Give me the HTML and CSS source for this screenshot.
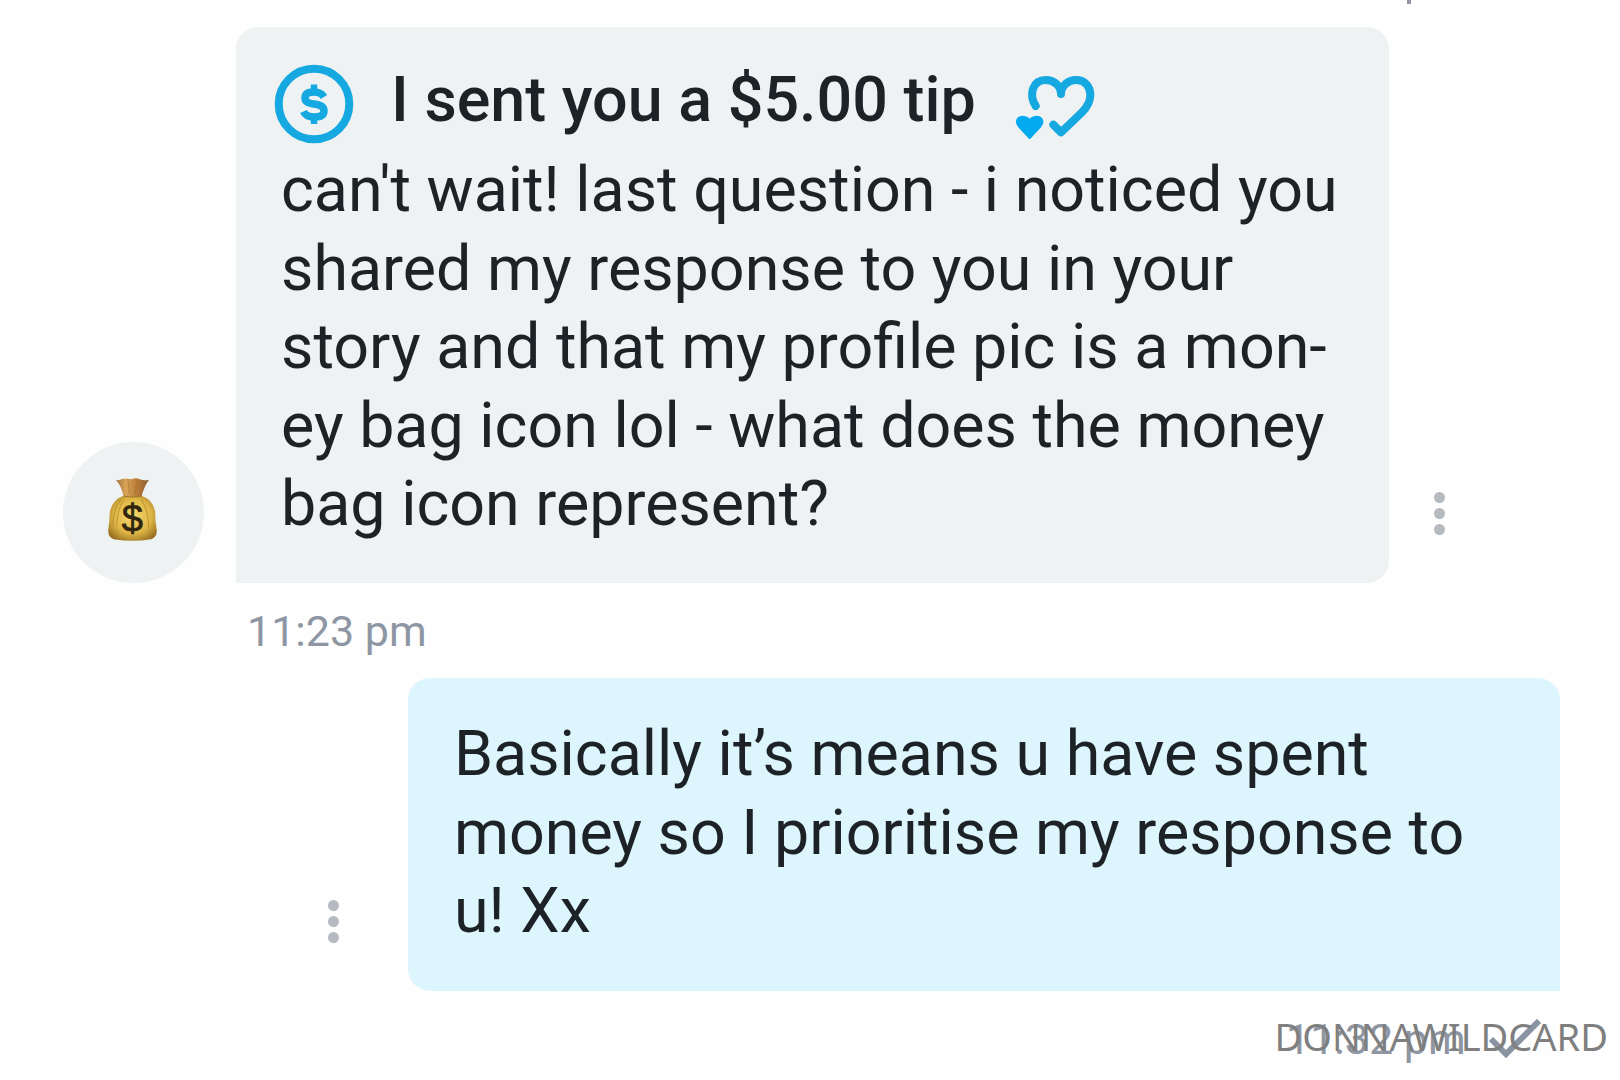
FILE: index.html
```html
<!DOCTYPE html>
<html lang="en">
<head>
  <meta charset="UTF-8">
  <meta name="viewport" content="width=device-width, initial-scale=1.0">
  <title>Messages</title>
  <link rel="stylesheet" href="styles.css">
</head>
<body>

  <div class="chat">
    <div class="previous"></div>

    <div class="message received">
      <div class="avatar">
        <svg class="bag" viewBox="0 0 145 188">
          <defs>
            <radialGradient id="bagFill" cx="50%" cy="45%" r="65%">
              <stop offset="0" stop-color="#f6da70"/>
              <stop offset="0.6" stop-color="#deb544"/>
              <stop offset="1" stop-color="#8f681e"/>
            </radialGradient>
            <linearGradient id="neckFill" x1="0" x2="1" y1="0" y2="0">
              <stop offset="0" stop-color="#9c6a3c"/>
              <stop offset="0.3" stop-color="#d8a557"/>
              <stop offset="0.6" stop-color="#bd803b"/>
              <stop offset="1" stop-color="#8b5b30"/>
            </linearGradient>
          </defs>
          <path fill="url(#neckFill)" d="M22 5 Q32 9 40 3 Q55 0 70 4 Q82 -3 94 4 Q108 9 122 5 Q108 22 99 57 L46 57 Q40 22 22 5Z"/>
          <path fill="url(#bagFill)" d="M46 53 Q72 59 99 53 Q132 63 140 100 Q140 130 145 157 Q145 178 128 183 Q72 192 17 183 Q0 178 0 157 Q4 130 5 100 Q14 63 46 53Z"/>
          <path fill="none" stroke="#9b7021" stroke-width="3" opacity="0.5" d="M48 64 Q27 90 25 145 M40 64 Q17 85 14 140 M98 64 Q119 90 121 150 M60 10 L63 48 M85 10 L80 48"/>
          <path fill="none" stroke="#754b20" stroke-width="3" opacity="0.5" d="M46 54 Q72 60 99 54"/>
          <text class="bag-sign" x="72" y="162" text-anchor="middle">$</text>
        </svg>
      </div>

      <div class="bubble">
        <div class="tip">
          <svg class="coin" viewBox="0 0 80 80">
            <circle cx="40" cy="40" r="35.3" fill="none" stroke="#16a8e0" stroke-width="8"/>
            <path fill="none" stroke="#16a8e0" stroke-width="7.5" d="M50 33 Q47 28 40 28 Q31 28 31 34 Q31 39 40 40 Q50 41 50 47 Q50 53 40 53 Q32 53 29.500 47.500"/>
            <path fill="none" stroke="#16a8e0" stroke-width="6.500" d="M40 20.500 V28 M40 53 V60"/>
          </svg>
          <span class="tip-text">I sent you a $5.00 tip</span>
          <svg class="hearts" viewBox="165 105 240 195">
            <path fill="none" stroke="#16a8e0" stroke-width="24" stroke-linecap="round" stroke-linejoin="round" d="M227 198 C205 163 218 120 258 120 C282 120 303 138 303 162 C303 138 324 120 348 120 C374 120 391 139 391 164 C391 186 380 203 365 218 L303 277 L280 254"/>
            <path fill="#03aaf0" stroke="#03aaf0" stroke-width="8" stroke-linejoin="round" d="M209 293 L177 258 C166 244 174 231 188 231 C199 231 207 238 209 244 C211 238 219 231 230 231 C244 231 252 244 241 258Z"/>
          </svg>
        </div>
        <p class="text">
          can't wait! last question - i noticed you<br>
          shared my response to you in your<br>
          story and that my profile pic is a mon-<br>
          ey bag icon lol - what does the money<br>
          bag icon represent?
        </p>
      </div>

      <div class="dots"><i></i><i></i><i></i></div>
    </div>

    <div class="time">11:23 pm</div>

    <div class="message sent">
      <div class="dots"><i></i><i></i><i></i></div>
      <div class="bubble">
        <p class="text">
          Basically it’s means u have spent<br>
          money so I prioritise my response to<br>
          u! Xx
        </p>
      </div>
    </div>

    <div class="time time-sent">
      <span>11:32 pm</span>
      <svg class="check" viewBox="0 0 54 42">
        <path fill="none" stroke="#8a93a2" stroke-width="6" d="M3 20 L18 35 L51 2"/>
      </svg>
    </div>
  </div>

  <div class="watermark">DONNAWILDCARD</div>

</body>
</html>
```

FILE: styles.css
```css
* {
  box-sizing: border-box;
}
body {
  margin: 0;
  height: 1080px;
  overflow: hidden;
  background-color: #fefefe;
  font-family: Roboto, sans-serif;
  color: #1d2226;
}
.chat {
  width: 1620px;
}
.previous {
  width: 4px;
  height: 4px;
  margin: 0 0 23px 1407px;
  background-color: #9296a0;
}
.message {
  display: flex;
  align-items: flex-end;
}
.received {
  height: 556px;
  padding-left: 63px;
}
.avatar {
  display: flex;
  align-items: center;
  justify-content: center;
  width: 141px;
  height: 141px;
  padding-bottom: 7px;
  padding-right: 3px;
  border-radius: 50%;
  background-color: #eff2f3;
}
.bag {
  width: 49px;
  height: 63px;
}
.bag-sign {
  font-family: "Liberation Sans", sans-serif;
  font-size: 114px;
  fill: #30260f;
  stroke: #30260f;
  stroke-width: 2px;
}
.bubble {
  border-radius: 22px;
}
.received .bubble {
  width: 1153px;
  height: 556px;
  margin-left: 32px;
  padding: 33px 38px 0;
  border-bottom-left-radius: 0;
  background-color: #eff2f3;
}
.tip {
  display: flex;
  align-items: flex-start;
  height: 91px;
}
.coin {
  width: 80px;
  height: 80px;
  margin-top: 4px;
}
.tip-text {
  width: 624px;
  margin-left: 37px;
  font-size: 62.8px;
  font-weight: 500;
  line-height: 80px;
  white-space: nowrap;
}
.hearts {
  width: 80px;
  height: 65px;
  margin-top: 15px;
}
.text {
  margin: 0;
  font-size: 62.75px;
  line-height: 78.6px;
  white-space: nowrap;
}
.received .text {
  padding-left: 7px;
}
.dots {
  display: flex;
  flex-direction: column;
  gap: 5px;
  margin-bottom: 48px;
}
.dots i {
  width: 11px;
  height: 11px;
  border-radius: 50%;
  background-color: #b4babf;
}
.received .dots {
  margin-left: 45px;
}
.time {
  height: 95px;
  padding: 23px 0 0 247px;
  font-size: 43px;
  line-height: 50px;
  color: #8f96a3;
}
.sent {
  height: 313px;
  padding-left: 328px;
}
.sent .bubble {
  width: 1152px;
  height: 313px;
  margin-left: 69px;
  padding: 37px 46px 0;
  border-bottom-right-radius: 0;
  background-color: #ddf5fc;
}
.time-sent {
  display: flex;
  align-items: flex-start;
  padding-left: 1286px;
}
.time-sent span {
  width: 202px;
}
.check {
  width: 54px;
  height: 42px;
  margin-top: 5px;
}
/* sits over the last timestamp */
.watermark {
  position: absolute;
  right: 12px;
  bottom: 19px;
  font-family: "Noto Sans", sans-serif;
  font-size: 38px;
  line-height: 50px;
  color: #7f7f7f;
}
```
